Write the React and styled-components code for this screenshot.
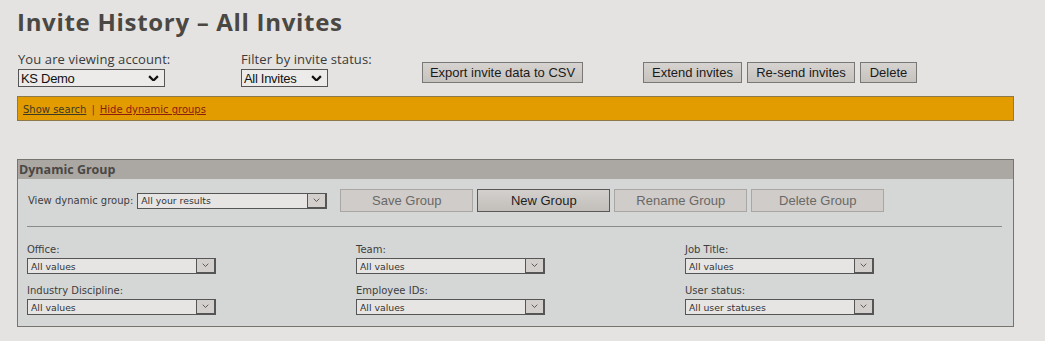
import React from 'react'
import styled, { createGlobalStyle, css } from 'styled-components'

const GlobalStyle = createGlobalStyle`
  body {
    margin: 0;
    background: #e4e3e1;
    font-family: "Open Sans", sans-serif;
  }
`

const filters = [
    { label: 'Office:', value: 'All values' },
    { label: 'Team:', value: 'All values' },
    { label: 'Job Title:', value: 'All values' },
    { label: 'Industry Discipline:', value: 'All values' },
    { label: 'Employee IDs:', value: 'All values' },
    { label: 'User status:', value: 'All user statuses' },
]

const Chevron = ({ size = 10, weight = 2, color = '#111' }) => (
    <svg width={size} height={size * 0.6} viewBox="0 0 10 6">
        <path d="M1 1 L5 5 L9 1" fill="none" stroke={color} strokeWidth={weight} />
    </svg>
)

const Select = ({ value, width, small }) => (
    <SelectBox $w={width} $small={small}>
        <span>{value}</span>
        {small ? (
            <ArrowBox><Chevron size={7} weight={1.2} color="#444" /></ArrowBox>
        ) : (
            <PlainArrow><Chevron size={11} weight={2} /></PlainArrow>
        )}
    </SelectBox>
)

const App = () => {
    return (
        <Page>
            <GlobalStyle />
            <Title>Invite History – All Invites</Title>
            <TopRow>
                <Field $w={223}>
                    <TopLabel>You are viewing account:</TopLabel>
                    <Select value="KS Demo" width={147} />
                </Field>
                <Field $w={181}>
                    <TopLabel>Filter by invite status:</TopLabel>
                    <Select value="All Invites" width={87} />
                </Field>
                <Button $w={161}>Export invite data to CSV</Button>
                <Actions>
                    <Button $w={99}>Extend invites</Button>
                    <Button $w={108}>Re-send invites</Button>
                    <Button $w={57}>Delete</Button>
                </Actions>
            </TopRow>
            <OrangeBar>
                <BarLink $color="#3c3a22">Show search</BarLink>
                <Sep>|</Sep>
                <BarLink $color="#8a1c10">Hide dynamic groups</BarLink>
            </OrangeBar>
            <Panel>
                <PanelHeader>Dynamic Group</PanelHeader>
                <PanelBody>
                    <GroupRow>
                        <SmallLabel>View dynamic group:</SmallLabel>
                        <Select value="All your results" width={190} small />
                        <GroupButtons>
                            <GroupButton>Save Group</GroupButton>
                            <GroupButton $active>New Group</GroupButton>
                            <GroupButton>Rename Group</GroupButton>
                            <GroupButton>Delete Group</GroupButton>
                        </GroupButtons>
                    </GroupRow>
                    <Rule />
                    <FilterGrid>
                        {filters.map(f => (
                            <FilterCell key={f.label}>
                                <SmallLabel>{f.label}</SmallLabel>
                                <Select value={f.value} width={189} small />
                            </FilterCell>
                        ))}
                    </FilterGrid>
                </PanelBody>
            </Panel>
        </Page>
    )
}

const Page = styled.div`
    padding: 7px 0 0 17px;
    width: 997px;
`
const Title = styled.h1`
    margin: 0;
    font-family: "Open Sans", sans-serif;
    font-weight: 700;
    font-size: 24px;
    letter-spacing: 0.7px;
    line-height: 30px;
    color: #4b4743;
`
const TopRow = styled.div`
    display: flex;
    align-items: flex-start;
    margin-top: 14px;
    padding-left: 1px;
`
const Field = styled.div`
    width: ${p => p.$w}px;
    display: flex;
    flex-direction: column;
`
const TopLabel = styled.div`
    font-family: "Open Sans", sans-serif;
    font-size: 13px;
    letter-spacing: 0.1px;
    line-height: 16px;
    color: #3a3a3a;
    margin-bottom: 2px;
`
const SelectBox = styled.div`
    box-sizing: border-box;
    width: ${p => p.$w}px;
    display: flex;
    align-items: center;
    justify-content: space-between;
    border: 1px solid #555;
    ${p => p.$small ? css`
        height: 16px;
        background: #e7e5e3;
        font-family: "DejaVu Sans", sans-serif;
        font-size: 9.3px;
        color: #333;
        padding-left: 3px;
    ` : css`
        height: 18px;
        background: #ecebe9;
        font-family: "Liberation Sans", sans-serif;
        font-size: 13px;
        letter-spacing: -0.3px;
        color: #111;
        padding-left: 2px;
    `}
`
const PlainArrow = styled.span`
    display: flex;
    padding-right: 5px;
`
const ArrowBox = styled.span`
    box-sizing: border-box;
    width: 20px;
    height: 16px;
    margin: -1px -1px -1px 0;
    display: flex;
    align-items: center;
    justify-content: center;
    background: #d2cfcc;
    border: 1px solid #555;
    border-width: 1px 2px 2px 1px;
`
const Button = styled.div`
    box-sizing: border-box;
    width: ${p => p.$w}px;
    height: 21px;
    margin-top: 11px;
    display: flex;
    align-items: center;
    justify-content: center;
    background: linear-gradient(#d6d3d0, #c6c2be);
    border: 1px solid #7a7876;
    font-family: "Liberation Sans", sans-serif;
    font-size: 13px;
    color: #1a1a1a;
    white-space: nowrap;
`
const Actions = styled.div`
    display: flex;
    gap: 5px;
    margin-left: 60px;
`
const OrangeBar = styled.div`
    box-sizing: border-box;
    margin-top: 9px;
    width: 997px;
    height: 25px;
    background: #e39c00;
    border: 1px solid #8c7a4c;
    display: flex;
    align-items: center;
    padding: 2px 0 0 5px;
    font-family: "DejaVu Sans", sans-serif;
    font-size: 10px;
`
const BarLink = styled.a`
    color: ${p => p.$color};
    text-decoration: underline;
`
const Sep = styled.span`
    color: #5a4a2a;
    margin: 0 5px;
`
const Panel = styled.div`
    box-sizing: border-box;
    margin-top: 38px;
    width: 997px;
    height: 168px;
    border: 1px solid #77736f;
    background: #d5d7d7;
`
const PanelHeader = styled.div`
    height: 19px;
    background: #aba7a3;
    font-family: "Open Sans", sans-serif;
    font-weight: 700;
    font-size: 12.5px;
    line-height: 20px;
    color: #4a4745;
    padding-left: 1px;
`
const PanelBody = styled.div`
    padding: 10px 11px 0 9px;
`
const GroupRow = styled.div`
    display: flex;
    align-items: center;
    gap: 4px;
    padding-left: 1px;
`
const SmallLabel = styled.div`
    font-family: "DejaVu Sans", sans-serif;
    font-size: 10px;
    line-height: 12px;
    color: #3e3e3e;
`
const GroupButtons = styled.div`
    display: flex;
    gap: 4px;
    margin-left: 9px;
`
const GroupButton = styled.div`
    box-sizing: border-box;
    width: 133px;
    height: 23px;
    display: flex;
    align-items: center;
    justify-content: center;
    font-family: "Liberation Sans", sans-serif;
    font-size: 13px;
    ${p => p.$active ? css`
        background: linear-gradient(#d3d0cd, #c2beba);
        border: 1px solid #5a5856;
        color: #1e1e1e;
    ` : css`
        background: #cfccc9;
        border: 1px solid #a9a6a3;
        color: #6a6866;
    `}
`
const Rule = styled.div`
    height: 1px;
    background: #8a8a8a;
    margin: 14px 0 0 0;
`
const FilterGrid = styled.div`
    display: grid;
    grid-template-columns: repeat(3, 329px);
    row-gap: 11px;
    margin-top: 17px;
`
const FilterCell = styled.div`
    display: flex;
    flex-direction: column;
    gap: 2px;
`

export default App
